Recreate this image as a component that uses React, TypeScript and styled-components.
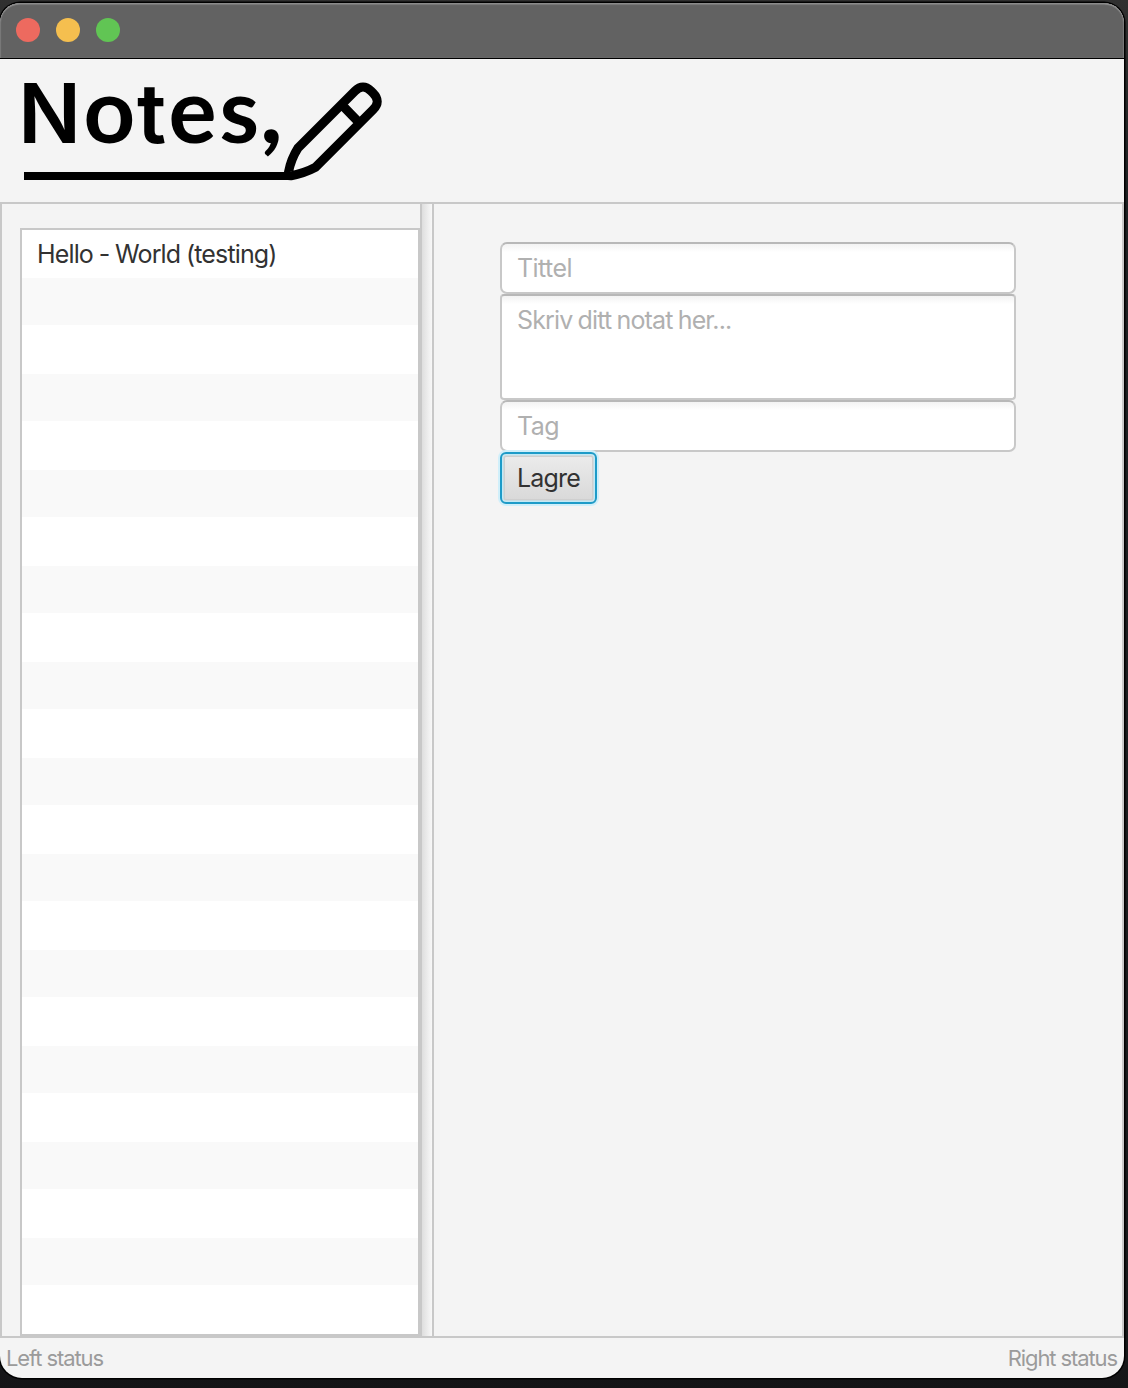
import React from "react";
import styled, { createGlobalStyle } from "styled-components";

const GlobalStyle = createGlobalStyle`
  * { box-sizing: border-box; }
  body { margin: 0; background: #17181a; }
`;

const Desktop = styled.div`
  width: 1128px;
  height: 1388px;
  padding: 3px 4px 10px 0;
  background: linear-gradient(#303030 0, #2a2b2b 60px, #1d2022 200px, #17181a 1340px, #151517 100%);
  font-family: Inter, "Liberation Sans", sans-serif;
`;

const Window = styled.div`
  display: flex;
  flex-direction: column;
  height: 1375px;
  border-radius: 20px 20px 22px 22px;
  overflow: hidden;
  background: #f4f4f4;
  box-shadow: 0 0 0 1.5px #000;
`;

const TitleBar = styled.div`
  display: flex;
  align-items: center;
  gap: 16px;
  flex: 0 0 56px;
  padding: 0 16px 1px;
  background: #626262;
  border-bottom: 1px solid #000;
  border-radius: 20px 20px 0 0;
  box-shadow: inset 0 2px 1px -0.5px #8e8e8e, inset 1px 0 1px #7c7c7c, inset -1px 0 1px #7c7c7c;
`;

const Light = styled.span<{ $color: string }>`
  width: 24px;
  height: 24px;
  border-radius: 50%;
  background: ${(p) => p.$color};
`;

const Header = styled.header`
  flex: 0 0 143px;
  padding: 1px 0 0 12px;
`;

const LogoArt = styled.svg`
  display: block;
  overflow: visible;
`;

const Glyph = styled.text<{ $face: string; $size: number; $weight: number }>`
  font-family: ${(p) => p.$face}, sans-serif;
  font-size: ${(p) => p.$size}px;
  font-weight: ${(p) => p.$weight};
`;

const Body = styled.main`
  display: flex;
  flex: 0 0 1136px;
  border: 2px solid #c8c8c8;
`;

const Sidebar = styled.aside`
  flex: 0 0 418px;
  padding: 24px 0 0 18px;
`;

const List = styled.ul`
  height: 1108px;
  margin: 0;
  padding: 0;
  list-style: none;
  background: #fff;
  border: 2px solid #c8c8c8;
`;

const Row = styled.li`
  height: 48px;
  padding: 0 15px;
  color: #323232;
  font-size: 25px;
  line-height: 48px;
  letter-spacing: -0.85px;
  word-spacing: -0.5px;
  &:nth-child(even) {
    background: linear-gradient(#f9f9f9 47px, #fff 47px);
  }
`;

const Divider = styled.div`
  flex: 0 0 14px;
  border: solid #c8c8c8;
  border-width: 0 2px;
  background: linear-gradient(90deg, #dedede, #f8f8f8);
`;

const Form = styled.form`
  display: flex;
  flex-direction: column;
  align-items: flex-start;
  padding: 38px 0 0 66px;
`;

const fieldLook = `
  display: block;
  width: 516px;
  margin: 0;
  border: 2px solid #c8c8c8;
  border-top-color: #b8b8b8;
  background: linear-gradient(#f3f3f3, #fff 8px);
  outline: none;
  color: #323232;
  font-family: Inter, sans-serif;
  font-size: 25px;
  letter-spacing: -0.55px;
  &::placeholder { color: #b0b0b0; opacity: 1; }
`;

const Field = styled.input`
  ${fieldLook}
  height: 52px;
  padding: 0 15px;
  border-radius: 7px;
`;

const Area = styled.textarea`
  ${fieldLook}
  height: 106px;
  padding: 9px 15px;
  line-height: 30px;
  letter-spacing: -0.85px;
  word-spacing: -1px;
  border-radius: 4px;
  resize: none;
`;

const SaveButton = styled.button`
  width: 97px;
  height: 52px;
  padding: 0;
  border: 2px solid #1d9bc8;
  border-radius: 6px;
  background: linear-gradient(#ececec, #d8d8d8);
  box-shadow: 0 0 0 2px #d0effa, inset 0 0 0 1.5px #c3e9f5, inset 0 0 0 3px #cfcfcf;
  color: #323232;
  font-family: Inter, sans-serif;
  font-size: 25px;
  letter-spacing: -0.8px;
`;

const StatusBar = styled.footer`
  display: flex;
  justify-content: space-between;
  flex: 1;
  padding: 0 7px 0 6px;
  color: #9b9b9b;
  font-size: 22px;
  line-height: 41px;
  letter-spacing: -1.1px;
`;

const ROW_COUNT = 23;
const notes = ["Hello - World (testing)"];

const wordmark = [
  { ch: "N", x: 18.3, face: "Inter", size: 82.5, weight: 600 },
  { ch: "o", x: 83.5, face: "Lato", size: 90, weight: 700 },
  { ch: "t", x: 137, face: "Inter", size: 82.5, weight: 600 },
  { ch: "e", x: 168.5, face: "Lato", size: 90, weight: 700 },
  { ch: "s", x: 219.5, face: "Lato", size: 90, weight: 700 },
  { ch: ",", x: 260.5, face: "Lato", size: 92, weight: 900 },
];

function Logo() {
  return (
    <LogoArt width="380" height="130" viewBox="12 60 380 130" role="img" aria-label="Notes logo">
      {wordmark.map((g) => (
        <Glyph key={g.ch} x={g.x} y="143" $face={g.face} $size={g.size} $weight={g.weight}>
          {g.ch}
        </Glyph>
      ))}
      <path d="M24 172H292V180H24Z" />
      <path
        d="M298 148L355 91Q363 83 371 91L373 93Q381.5 101.5 373 109.8L315.5 167.3Q305 173 291 175.8Q288 176 288.5 172Q291 159 298 148ZM343 106L358 121.5"
        fill="none"
        stroke="#000"
        strokeWidth="9"
        strokeLinejoin="round"
      />
    </LogoArt>
  );
}

export default function App() {
  return (
    <Desktop>
      <GlobalStyle />
      <Window>
        <TitleBar>
          <Light $color="#ed6a5f" />
          <Light $color="#f5bf4f" />
          <Light $color="#61c554" />
        </TitleBar>
        <Header>
          <Logo />
        </Header>
        <Body>
          <Sidebar>
            <List>
              {Array.from({ length: ROW_COUNT }, (_, i) => (
                <Row key={i}>{notes[i]}</Row>
              ))}
            </List>
          </Sidebar>
          <Divider />
          <Form onSubmit={(e) => e.preventDefault()}>
            <Field placeholder="Tittel" />
            <Area placeholder="Skriv ditt notat her..." />
            <Field placeholder="Tag" />
            <SaveButton type="submit">Lagre</SaveButton>
          </Form>
        </Body>
        <StatusBar>
          <span>Left status</span>
          <span>Right status</span>
        </StatusBar>
      </Window>
    </Desktop>
  );
}
